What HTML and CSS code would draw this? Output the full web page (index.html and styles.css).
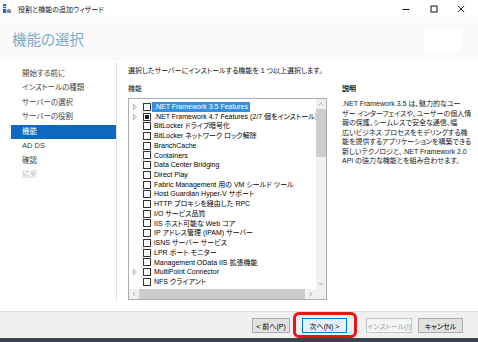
FILE: index.html
```html
<!DOCTYPE html>
<html lang="ja">
<head>
    <meta charset="UTF-8">
    <meta name="viewport" content="width=device-width, initial-scale=1.0">
    <title>役割と機能の追加ウィザード</title>
    <link rel="stylesheet" href="styles.css">
</head>
<body>
<div class="window">

    <!-- タイトルバー -->
    <div class="titlebar">
        <svg class="app-icon" width="8" height="9" viewBox="0 0 8 9">
            <rect x="0" y="0" width="3.2" height="9" fill="#1d6cc4"/>
            <rect x="0" y="2" width="3.2" height="0.8" fill="#fff"/>
            <rect x="0" y="4.2" width="3.2" height="0.8" fill="#fff"/>
            <path d="M3.8 6 L5.8 4.4 L8 6 V9 H3.8 Z" fill="#8c8c8c"/>
        </svg>
        <span class="title-text">役割と機能の追加ウィザード</span>
        <div class="controls">
            <span class="ctl">
                <svg width="8" height="8" viewBox="0 0 8 8"><line x1="0.5" y1="4.5" x2="7.5" y2="4.5" stroke="#111" stroke-width="1"/></svg>
            </span>
            <span class="ctl">
                <svg width="8" height="8" viewBox="0 0 8 8"><rect x="1" y="1" width="6" height="6" fill="none" stroke="#111" stroke-width="1"/></svg>
            </span>
            <span class="ctl">
                <svg width="8" height="8" viewBox="0 0 8 8"><path d="M0.8 0.8 L7.2 7.2 M7.2 0.8 L0.8 7.2" stroke="#111" stroke-width="0.9"/></svg>
            </span>
        </div>
    </div>

    <!-- ヘッダー -->
    <div class="header">
        <h1 class="page-title">機能の選択</h1>
        <div class="server-box"></div>
    </div>

    <div class="main">
        <ul class="nav">
            <li>開始する前に</li>
            <li>インストールの種類</li>
            <li>サーバーの選択</li>
            <li>サーバーの役割</li>
            <li class="active">機能</li>
            <li>AD DS</li>
            <li>確認</li>
            <li class="disabled">結果</li>
        </ul>

        <div class="content">
            <p class="intro">選択したサーバーにインストールする機能を 1 つ以上選択します。</p>

            <div class="columns">
                <div class="features">
                    <div class="label">機能</div>
                    <div class="listbox">
                        <div class="rows">
                            <div class="row"><span class="exp"><svg width="4" height="6" viewBox="0 0 4 6"><path d="M0.5 0.5 L3.5 3 L0.5 5.5 Z" fill="none" stroke="#a0a0a0" stroke-width="0.8"/></svg></span><span class="cb"></span><span class="name sel">.NET Framework 3.5 Features</span></div>
                            <div class="row"><span class="exp"><svg width="4" height="6" viewBox="0 0 4 6"><path d="M0.5 0.5 L3.5 3 L0.5 5.5 Z" fill="none" stroke="#a0a0a0" stroke-width="0.8"/></svg></span><span class="cb part"></span><span class="name">.NET Framework 4.7 Features (2/7 個をインストール済)</span></div>
                            <div class="row"><span class="exp"></span><span class="cb"></span><span class="name">BitLocker ドライブ暗号化</span></div>
                            <div class="row"><span class="exp"></span><span class="cb"></span><span class="name">BitLocker ネットワーク ロック解除</span></div>
                            <div class="row"><span class="exp"></span><span class="cb"></span><span class="name">BranchCache</span></div>
                            <div class="row"><span class="exp"></span><span class="cb"></span><span class="name">Containers</span></div>
                            <div class="row"><span class="exp"></span><span class="cb"></span><span class="name">Data Center Bridging</span></div>
                            <div class="row"><span class="exp"></span><span class="cb"></span><span class="name">Direct Play</span></div>
                            <div class="row"><span class="exp"></span><span class="cb"></span><span class="name">Fabric Management 用の VM シールド ツール</span></div>
                            <div class="row"><span class="exp"></span><span class="cb"></span><span class="name">Host Guardian Hyper-V サポート</span></div>
                            <div class="row"><span class="exp"></span><span class="cb"></span><span class="name">HTTP プロキシを経由した RPC</span></div>
                            <div class="row"><span class="exp"></span><span class="cb"></span><span class="name">I/O サービス品質</span></div>
                            <div class="row"><span class="exp"></span><span class="cb"></span><span class="name">IIS ホスト可能な Web コア</span></div>
                            <div class="row"><span class="exp"></span><span class="cb"></span><span class="name">IP アドレス管理 (IPAM) サーバー</span></div>
                            <div class="row"><span class="exp"></span><span class="cb"></span><span class="name">iSNS サーバー サービス</span></div>
                            <div class="row"><span class="exp"></span><span class="cb"></span><span class="name">LPR ポート モニター</span></div>
                            <div class="row"><span class="exp"></span><span class="cb"></span><span class="name">Management OData IIS 拡張機能</span></div>
                            <div class="row"><span class="exp"><svg width="4" height="6" viewBox="0 0 4 6"><path d="M0.5 0.5 L3.5 3 L0.5 5.5 Z" fill="none" stroke="#a0a0a0" stroke-width="0.8"/></svg></span><span class="cb"></span><span class="name">MultiPoint Connector</span></div>
                            <div class="row"><span class="exp"></span><span class="cb"></span><span class="name">NFS クライアント</span></div>
                        </div>
                        <div class="vscroll">
                            <span class="arrow"><svg width="6" height="4" viewBox="0 0 6 4"><path d="M1 3.2 L3 1.2 L5 3.2" fill="none" stroke="#a3a3a3" stroke-width="0.9"/></svg></span>
                            <span class="vthumb"></span>
                            <span class="spacer"></span>
                            <span class="arrow"><svg width="6" height="4" viewBox="0 0 6 4"><path d="M1 0.8 L3 2.8 L5 0.8" fill="none" stroke="#a3a3a3" stroke-width="0.9"/></svg></span>
                        </div>
                        <div class="hscroll">
                            <span class="arrow"><svg width="4" height="6" viewBox="0 0 4 6"><path d="M3.2 1 L1.2 3 L3.2 5" fill="none" stroke="#a3a3a3" stroke-width="0.9"/></svg></span>
                            <span class="hthumb"></span>
                            <span class="arrow"><svg width="4" height="6" viewBox="0 0 4 6"><path d="M0.8 1 L2.8 3 L0.8 5" fill="none" stroke="#a3a3a3" stroke-width="0.9"/></svg></span>
                        </div>
                        <div class="corner"></div>
                    </div>
                </div>

                <div class="desc">
                    <div class="label bold">説明</div>
                    <p class="desc-text">
                        <span>.NET Framework 3.5 は、魅力的なユー</span>
                        <span>ザー インターフェイスや、ユーザーの個人情</span>
                        <span>報の保護、シームレスで安全な通信、幅</span>
                        <span>広いビジネス プロセスをモデリングする機</span>
                        <span>能を提供するアプリケーションを構築できる</span>
                        <span>新しいテクノロジと、.NET Framework 2.0</span>
                        <span>API の強力な機能とを組み合わせます。</span>
                    </p>
                </div>
            </div>
        </div>
    </div>

    <!-- ボタン -->
    <div class="footer">
        <button class="btn prev">&lt; 前へ(P)</button>
        <span class="next-wrap"><button class="btn next">次へ(N) &gt;</button></span>
        <button class="btn install" disabled>インストール(I)</button>
        <button class="btn cancel">キャンセル</button>
    </div>
    <div class="taskbar"></div>
</div>
</body>
</html>
```

FILE: styles.css
```css
body {
  margin: 0;
  font-family: "Liberation Sans", "Noto Sans CJK JP", sans-serif;
  font-feature-settings: "palt";
  font-size: 7px;
  color: #111;
  background: #fff;
}

.window {
  width: 478px;
  height: 342px;
  display: flex;
  flex-direction: column;
  overflow: hidden;
}

/* タイトルバー */
.titlebar {
  height: 17px;
  display: flex;
  align-items: center;
  padding-left: 3px;
  background: #fff;
}

.app-icon {
  flex: none;
  margin-right: 7px;
}

.title-text {
  font-size: 7px;
  color: #222;
}

.controls {
  margin-left: auto;
  display: flex;
  height: 17px;
  padding-right: 3px;
}

.ctl {
  width: 27.5px;
  display: flex;
  align-items: center;
  justify-content: center;
}

/* ヘッダー */
.header {
  height: 43px;
  box-sizing: border-box;
  padding: 4px 17px 0 12px;
  display: flex;
  align-items: center;
  background: #fafafa;
}

.page-title {
  margin: 0;
  font-size: 14.5px;
  font-weight: normal;
  line-height: 1;
  color: #7eaacf;
}

.server-box {
  margin-left: auto;
  width: 37px;
  height: 23px;
  background: #fff;
}

/* メイン */
.main {
  flex: 1;
  display: flex;
  min-height: 0;
  background: #fff;
}

.nav {
  width: 116px;
  flex: none;
  margin: 2px 0 11px;
  padding: 4.75px 0 0;
  list-style: none;
  border-right: 1px solid #e2e2e2;
}

.nav li {
  height: 14.5px;
  line-height: 14.5px;
  margin-left: 11px;
  padding-left: 11px;
  font-size: 7.5px;
  color: #444;
  white-space: nowrap;
}

.nav li.active {
  background: #0c69bd;
  color: #fff;
}

.nav li.disabled {
  color: #c4c4c4;
}

.content {
  flex: 1;
  min-width: 0;
  padding: 6px 0 11px 11px;
  display: flex;
  flex-direction: column;
}

.intro {
  margin: 0;
  height: 10px;
  line-height: 10px;
  white-space: nowrap;
}

.columns {
  flex: 1;
  min-height: 0;
  display: flex;
  gap: 15px;
  margin-top: 8px;
}

.features {
  width: 199px;
  flex: none;
  display: flex;
  flex-direction: column;
}

.label {
  height: 10px;
  line-height: 10px;
}

.bold {
  font-weight: bold;
}

/* リストボックス */
.listbox {
  flex: 1;
  min-height: 0;
  margin-top: 4px;
  border: 1px solid #abadb3;
  display: grid;
  grid-template-columns: 1fr 10px;
  grid-template-rows: 1fr 10px;
  overflow: hidden;
}

.rows {
  min-width: 0;
  overflow: hidden;
  padding-top: 3px;
}

.row {
  height: 9.72px;
  display: flex;
  align-items: center;
  white-space: nowrap;
  color: #000;
}

.exp {
  width: 14px;
  flex: none;
  box-sizing: border-box;
  padding-left: 4px;
  display: flex;
  align-items: center;
}

.cb {
  width: 8px;
  height: 8px;
  flex: none;
  box-sizing: border-box;
  border: 1px solid #333;
  background: #fff;
  display: flex;
  align-items: center;
  justify-content: center;
}

.cb.part::after {
  content: "";
  width: 4px;
  height: 4px;
  background: #1a1a1a;
}

.name {
  margin-left: 3px;
  line-height: 9.72px;
}

.name.sel {
  margin-left: 1px;
  padding: 0 2px;
  background: #3390e2;
  color: #fff;
}

.vscroll {
  background: #f0f0f0;
  display: flex;
  flex-direction: column;
}

.arrow {
  flex: none;
  width: 10px;
  height: 10px;
  display: flex;
  align-items: center;
  justify-content: center;
}

.vthumb {
  height: 48px;
  flex: none;
  background: #cdcdcd;
}

.spacer {
  flex: 1;
}

.hscroll {
  background: #f0f0f0;
  display: flex;
}

.hthumb {
  flex: 1;
  margin-right: 1px;
  background: #cdcdcd;
}

.corner {
  background: #f0f0f0;
}

/* 説明 */
.desc {
  flex: 1;
  min-width: 0;
}

.desc-text {
  margin: 5px 0 0;
  line-height: 9.5px;
  color: #222;
}

.desc-text span {
  display: block;
  white-space: nowrap;
}

/* フッター */
.footer {
  height: 27px;
  box-sizing: border-box;
  border-top: 1px solid #dedede;
  background: #f0f0f0;
  display: flex;
  align-items: flex-start;
  justify-content: flex-end;
  padding: 6px 15px 0 0;
}

.btn {
  height: 15px;
  box-sizing: border-box;
  padding: 0;
  border: 1px solid #adadad;
  background: #e1e1e1;
  font-family: inherit;
  font-feature-settings: "palt";
  font-size: 7px;
  color: #000;
  white-space: nowrap;
  display: flex;
  align-items: center;
  justify-content: center;
}

.prev {
  width: 38px;
}

.next-wrap {
  position: relative;
  display: flex;
  margin: 0 19px 0 12px;
}

.next-wrap::after {
  content: "";
  position: absolute;
  left: -9px;
  top: -6px;
  right: -10px;
  bottom: -5px;
  border: 3px solid #e8141c;
  border-radius: 6px;
}

.next {
  width: 45px;
  border-color: #0078d7;
  background: #e5f1fb;
}

.install {
  width: 46px;
  margin-right: 6px;
  border-color: #c6c6c6;
  background: #f5f5f5;
  color: #a3a3a3;
}

.cancel {
  width: 45px;
}

.taskbar {
  height: 4px;
  background: #38434f;
}
```
